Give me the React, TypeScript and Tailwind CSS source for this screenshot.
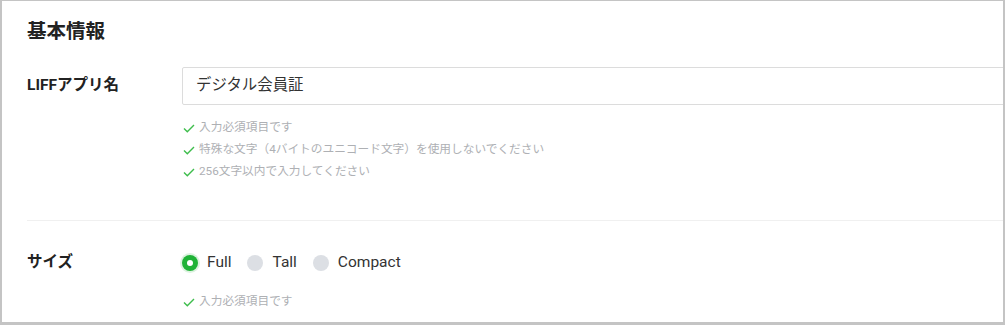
import React from "react";

const font = { fontFamily: 'Roboto, "Noto Sans CJK JP", sans-serif' };

function Check() {
  return (
    <svg width="12" height="9" viewBox="0 0 12 9" className="mr-[4px] shrink-0">
      <polyline
        points="1,4.5 4.3,7.8 11,1"
        fill="none"
        stroke="#3ebd4c"
        strokeWidth="1.4"
      />
    </svg>
  );
}

function Hint({ children }: { children: React.ReactNode }) {
  return (
    <div className="flex items-center h-[22px] text-[11.7px] text-[#aeb0b4]">
      <Check />
      <span>{children}</span>
    </div>
  );
}

function Radio({ label, checked }: { label: string; checked?: boolean }) {
  return (
    <label className="flex items-center mr-[16px]">
      {checked ? (
        <span className="w-[16px] h-[16px] rounded-full bg-[#1fb236] flex items-center justify-center ring-2 ring-[#dcf2df]">
          <span className="w-[6px] h-[6px] rounded-full bg-white" />
        </span>
      ) : (
        <span className="w-[16px] h-[16px] rounded-full bg-[#dcdfe4]" />
      )}
      <span className="ml-[9px] text-[15.5px] text-[#333]">{label}</span>
    </label>
  );
}

export default function App() {
  return (
    <div
      style={font}
      className="w-[1005px] h-[325px] bg-white border-t border-l-2 border-r-2 border-b-[3px] border-[#c4c4c4] overflow-hidden"
    >
      <div className="pl-[25px]">
        <h2 className="mt-[19px] h-[24px] leading-[24px] text-[19.5px] font-bold text-[#222]">
          基本情報
        </h2>

        <div className="mt-[23px] flex items-center">
          <div className="w-[155px] shrink-0 text-[15.5px] font-bold text-[#222]">
            LIFFアプリ名
          </div>
          <div className="w-[840px] shrink-0 h-[38px] border border-[#dcdcdc] rounded-[2px] flex items-center px-[13px] text-[15.4px] text-[#333]">
            デジタル会員証
          </div>
        </div>

        <div className="mt-[12px] pl-[156px]">
          <Hint>入力必須項目です</Hint>
          <Hint>特殊な文字（4バイトのユニコード文字）を使用しないでください</Hint>
          <Hint>256文字以内で入力してください</Hint>
        </div>

        <div className="mt-[37px] h-px bg-[#f0f0f0]" />

        <div className="mt-[30px] flex items-center h-[24px]">
          <div className="w-[155px] shrink-0 text-[15.5px] font-bold text-[#222]">
            サイズ
          </div>
          <Radio label="Full" checked />
          <Radio label="Tall" />
          <Radio label="Compact" />
        </div>

        <div className="mt-[16px] pl-[156px]">
          <Hint>入力必須項目です</Hint>
        </div>
      </div>
    </div>
  );
}
